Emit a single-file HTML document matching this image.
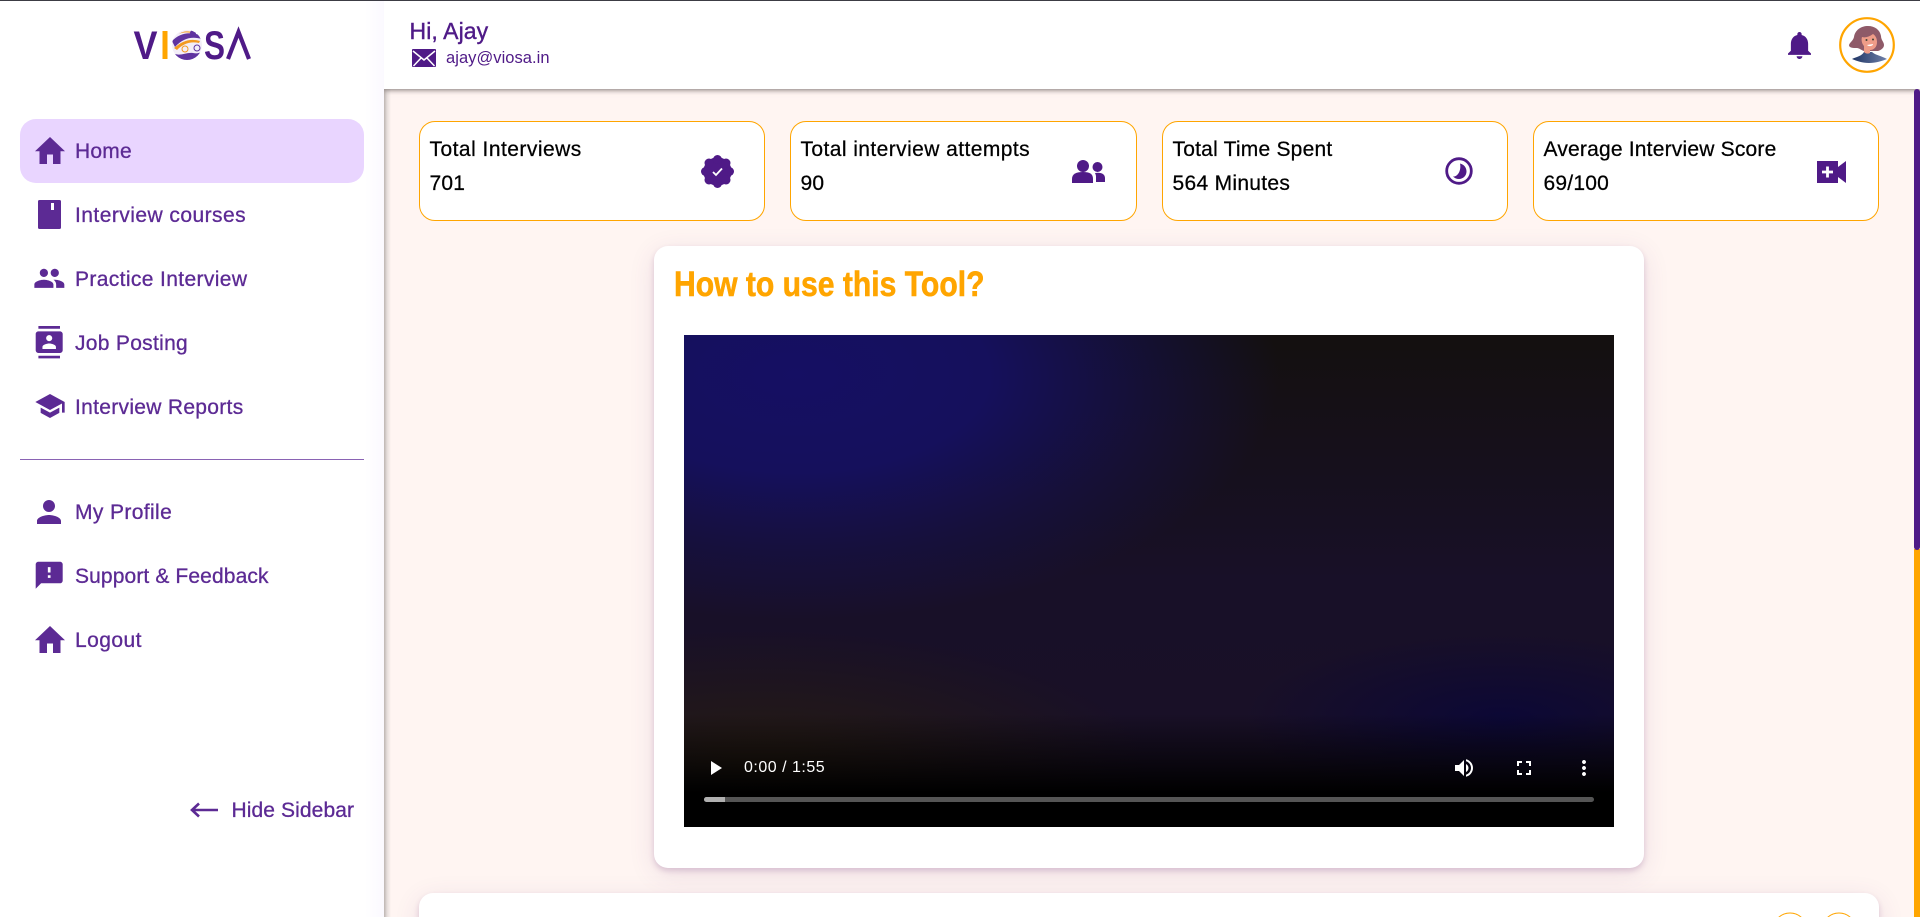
<!DOCTYPE html>
<html lang="en"><head><meta charset="utf-8"><title>VIOSA</title>
<style>
*{box-sizing:border-box}
html,body{margin:0;padding:0;width:1920px;height:917px;overflow:hidden;background:#fff;font-family:"Liberation Sans",Arial,sans-serif}
#root{position:relative;width:1920px;height:917px;overflow:hidden}
.a{position:absolute}
svg{position:absolute;display:block;overflow:visible}
#main{left:384px;top:89px;width:1536px;height:828px;background:#fff5f2}
#mshadow{left:384px;top:89px;width:7px;height:828px;background:linear-gradient(90deg,#bdb5b2,#e6dedc 45%,rgba(255,245,242,0));z-index:3}
#hdr{left:384px;top:0;width:1536px;height:89px;background:#fff;box-shadow:0 1px 5px rgba(40,30,30,.6);z-index:4}
#side{left:0;top:0;width:384px;height:917px;background:linear-gradient(90deg,#fff 95%,#fbf9ff);z-index:5}
#top{left:0;top:0;width:1920px;height:1px;background:#3c3c44;z-index:9}
.nav{position:absolute;left:75px;font-size:21px;line-height:30px;height:30px;color:#5c2a94;letter-spacing:.3px;-webkit-text-stroke:.3px #5c2a94;white-space:nowrap}
.ic{fill:#5c2a94}
#act{left:20px;top:119px;width:344px;height:64px;background:#e9d5ff;border-radius:16px}
.card{position:absolute;top:121px;width:346px;height:100px;background:#fff;border:1px solid #ffa500;border-radius:16px}
.t{position:absolute;left:9.5px;font-size:21px;line-height:30px;color:#000;letter-spacing:.22px;-webkit-text-stroke:.25px #000;white-space:nowrap}
.big{background:#fff;border-radius:14px;box-shadow:0 3px 6px rgba(110,50,120,.2),0 6px 26px rgba(110,50,120,.12)}
#vid{left:684px;top:335px;width:930px;height:492px;background:
linear-gradient(180deg,rgba(0,0,0,0) 77%,rgba(0,0,0,.6) 87%,#000 93%),
radial-gradient(ellipse 28% 18% at 88% 78%,rgba(6,4,60,.7),rgba(6,4,60,0)),
radial-gradient(ellipse 42% 28% at 8% 88%,rgba(40,30,14,.85),rgba(40,30,14,0)),
radial-gradient(ellipse 52% 50% at 12% 8%,#150f63 0%,#15105c 40%,rgba(21,16,80,.55) 72%,rgba(21,16,60,0) 100%),
linear-gradient(180deg,#14100f 0%,#181028 50%,#1a1026 100%)}
</style></head><body><div id="root">
<div class="a" id="top"></div>
<div class="a" id="main"></div>
<div class="a" id="mshadow"></div>

<div class="a" id="hdr">
 <div class="a" style="left:25.5px;top:17px;font-size:23px;line-height:28px;color:#4f1a87;letter-spacing:.1px;-webkit-text-stroke:.4px #4f1a87;white-space:nowrap">Hi, Ajay</div>
 <svg style="left:28px;top:49px" width="24" height="18" viewBox="0 0 24 18"><rect width="24" height="18" rx="1" fill="#4f1a87"/><path d="M1 2l11 9 11-9M1.5 17l8-8.5M22.5 17l-8-8.5" fill="none" stroke="#fff" stroke-width="1.5"/></svg>
 <div class="a" style="left:62px;top:48px;font-size:16.5px;line-height:20px;color:#4f1a87;letter-spacing:.05px;white-space:nowrap">ajay@viosa.in</div>
 <svg style="left:1404px;top:32px" width="23" height="27" viewBox="4 2.5 16 19.5" preserveAspectRatio="none"><path fill="#4f1a87" d="M12 22c1.1 0 2-.9 2-2h-4c0 1.1.89 2 2 2zm6-6v-5c0-3.07-1.64-5.64-4.5-6.32V4c0-.83-.67-1.5-1.5-1.5s-1.5.67-1.5 1.5v.68C7.63 5.36 6 7.92 6 11v5l-2 2v1h16v-1l-2-2z"/></svg>
 <svg style="left:1455px;top:17px" width="56" height="56" viewBox="0 0 56 56">
  <defs><linearGradient id="sh" x1="0" x2="1"><stop offset="0" stop-color="#1f3565"/><stop offset="1" stop-color="#6f80a8"/></linearGradient></defs>
  <circle cx="28" cy="28" r="26.8" fill="#fff" stroke="#ffa500" stroke-width="2.2"/>
  <path d="M13 42c4-2 10-3 12-7h8c3 3 10 4 15 7-5 2-11 4-18 4s-12-2-17-4z" fill="url(#sh)"/>
  <path d="M10 28c1-3 4-4 5-8 1-7 7-11 14-11s12 4 13 10c0 4 3 6 3 9 0 3-3 5-6 6l-14 0c-3-1-5-3-7-3-4 0-8-0-8-3z" fill="#8f5a68"/>
  <path d="M23 20c3 1 7 0 11-3 3 2 4 5 4 8 0 5-3 8-7 8v3c-2 1-4 1-6-1v-6c-2-2-3-6-2-9z" fill="#ef9c88"/>
  <path d="M28 28l6-1c0 2-4 3-6 1z" fill="#fff"/><circle cx="27.500" cy="23" r="1" fill="#443"/><circle cx="34" cy="22.500" r="1" fill="#443"/>
 </svg>
</div>

<div class="a" id="side">
 <svg style="left:133px;top:28px" width="118" height="34" viewBox="0 0 118 34">
  <defs><clipPath id="gc"><circle cx="54" cy="17" r="15"/></clipPath></defs>
  <text x=".5" y="31" font-family="Liberation Sans" font-weight="bold" font-size="40" fill="#4f1a87" textLength="24" lengthAdjust="spacingAndGlyphs">V</text>
  <rect x="29.500" y="3" width="5" height="28" fill="#ffa500"/>
  <g clip-path="url(#gc)"><rect x="38" y="2" width="32" height="30" fill="#f3eef8"/>
  <path d="M39 13c8-8 18-10 30-5v3c-10-3-19-1-27 8zM42 26c6 2 12-2 18-1 4 1 7 0 10-2v10H40z" fill="#5f33a0"/>
  <path d="M41 20c8-7 16-10 26-7l-1 2c-9-2-16 1-22 7zM46 6c4-3 8-3 13-2l-1 1c-4-1-8-1-12 1z" fill="#f39a21"/>
  <circle cx="60" cy="5" r="3" fill="#5f33a0"/><circle cx="64" cy="20" r="3" fill="none" stroke="#5f33a0"/><circle cx="52" cy="21" r="3" fill="none" stroke="#f39a21"/></g>
  <text x="71" y="31" font-family="Liberation Sans" font-weight="bold" font-size="40" fill="#4f1a87" textLength="21" lengthAdjust="spacingAndGlyphs">S</text>
  <path d="M95 31L105.500 4l10.500 27" fill="none" stroke="#4f1a87" stroke-width="4.200"/>
 </svg>

 <div class="a" id="act"></div>
 <svg style="left:34.500px;top:137px" width="30" height="27" viewBox="2 3 20 17" preserveAspectRatio="none"><path class="ic" d="M10 20v-6h4v6h5v-8h3L12 3 2 12h3v8z"/></svg>
 <div class="nav" style="top:137px;letter-spacing:.22px">Home</div>

 <svg style="left:38px;top:200px" width="23" height="29" viewBox="0 0 23 29"><rect width="23" height="29" rx="1.500" class="ic"/><rect x="13" y="3" width="3" height="7" fill="#fff"/></svg>
 <div class="nav" style="top:201px;letter-spacing:.45px">Interview courses</div>

 <svg style="left:33px;top:262px" width="32.700" height="32.700" viewBox="0 0 24 24"><path class="ic" d="M16 11c1.660 0 2.990-1.340 2.990-3S17.660 5 16 5c-1.660 0-3 1.340-3 3s1.340 3 3 3zm-8 0c1.660 0 2.990-1.340 2.990-3S9.660 5 8 5C6.340 5 5 6.340 5 8s1.340 3 3 3zm0 2c-2.330 0-7 1.170-7 3.500V19h14v-2.500c0-2.330-4.670-3.500-7-3.500zm8 0c-.29 0-.62.02-.97.05 1.160.84 1.970 1.970 1.970 3.450V19h6v-2.500c0-2.330-4.670-3.500-7-3.500z"/></svg>
 <div class="nav" style="top:265px;letter-spacing:.37px">Practice Interview</div>

 <svg style="left:33px;top:326px" width="32.400" height="32.400" viewBox="0 0 24 24"><path class="ic" d="M20 0H4v2h16V0zM4 24h16v-2H4v2zM20 4H4c-1.100 0-2 .9-2 2v12c0 1.100.9 2 2 2h16c1.100 0 2-.9 2-2V6c0-1.100-.9-2-2-2zm-8 2.750c1.240 0 2.250 1.010 2.250 2.250s-1.010 2.250-2.250 2.250S9.750 10.240 9.750 9 10.760 6.750 12 6.750zM17 17H7v-1.500c0-1.670 3.330-2.500 5-2.500s5 .83 5 2.500V17z"/></svg>
 <div class="nav" style="top:329px">Job Posting</div>

 <svg style="left:33.500px;top:390px" width="32" height="32" viewBox="0 0 24 24"><path class="ic" d="M5 13.180v4L12 21l7-3.820v-4L12 17l-7-3.820zM12 3 1 9l11 6 9-4.910V17h2V9L12 3z"/></svg>
 <div class="nav" style="top:393px">Interview Reports</div>

 <div class="a" style="left:20px;top:459px;width:344px;height:1px;background:#8a63b4"></div>

 <svg style="left:31.300px;top:494px" width="36" height="36" viewBox="0 0 24 24"><path class="ic" d="M12 12c2.210 0 4-1.790 4-4s-1.790-4-4-4-4 1.790-4 4 1.790 4 4 4zm0 2c-2.670 0-8 1.340-8 4v2h16v-2c0-2.660-5.330-4-8-4z"/></svg>
 <div class="nav" style="top:498px;letter-spacing:.38px">My Profile</div>

 <svg style="left:33px;top:559px" width="32.400" height="32.400" viewBox="0 0 24 24"><path class="ic" d="M20 2H4c-1.100 0-1.990.9-1.990 2L2 22l4-4h14c1.100 0 2-.9 2-2V4c0-1.100-.9-2-2-2zm-7 12h-2v-2h2v2zm0-4h-2V6h2v4z"/></svg>
 <div class="nav" style="top:562px;letter-spacing:.12px">Support &amp; Feedback</div>

 <svg style="left:34.500px;top:626px" width="30" height="27" viewBox="2 3 20 17" preserveAspectRatio="none"><path class="ic" d="M10 20v-6h4v6h5v-8h3L12 3 2 12h3v8z"/></svg>
 <div class="nav" style="top:626px;letter-spacing:.45px">Logout</div>

 <svg style="left:190px;top:802px" width="28" height="16" viewBox="0 0 28 16"><path d="M2 8h26M9 1.500L2 8l7 6.500" fill="none" stroke="#5c2a94" stroke-width="2.600"/></svg>
 <div class="nav" style="left:231.500px;top:796px;letter-spacing:.1px">Hide Sidebar</div>
</div>

<div class="card" style="left:419px"><div class="t" style="top:13px;letter-spacing:.47px">Total Interviews</div><div class="t" style="top:47px">701</div>
 <svg style="left:280.500px;top:33px" width="33" height="33" viewBox="0 0 33 33"><g fill="#4f1a87"><circle cx="16.500" cy="16.500" r="14.200"/><circle cx="16.500" cy="4.500" r="4.500"/><circle cx="16.500" cy="28.500" r="4.500"/><circle cx="4.500" cy="16.500" r="4.500"/><circle cx="28.500" cy="16.500" r="4.500"/><circle cx="8" cy="8" r="4.500"/><circle cx="25" cy="8" r="4.500"/><circle cx="8" cy="25" r="4.500"/><circle cx="25" cy="25" r="4.500"/></g><path d="M12 17l3 3 6-6.500" fill="none" stroke="#fff" stroke-width="1.800"/></svg>
</div>
<div class="card" style="left:790px;width:347px"><div class="t" style="top:13px;letter-spacing:.42px">Total interview attempts</div><div class="t" style="top:47px">90</div>
 <svg style="left:281px;top:38px" width="34" height="24" viewBox="0 0 34 24"><circle cx="11" cy="6" r="6" fill="#4f1a87"/><path d="M0 23v-4c0-5 4-7 11-7s10 2 10 7v4z" fill="#4f1a87"/><circle cx="25.500" cy="7" r="5" fill="#4f1a87"/><path d="M23 13c6-1 10 1 10 5v4h-9v-4c0-2 0-3-1-5z" fill="#4f1a87"/></svg>
</div>
<div class="card" style="left:1162px"><div class="t" style="top:13px">Total Time Spent</div><div class="t" style="top:47px;letter-spacing:.3px">564 Minutes</div>
 <svg style="left:282px;top:35px" width="28" height="28" viewBox="0 0 28 28"><circle cx="14" cy="14" r="12.300" fill="none" stroke="#4f1a87" stroke-width="2.800"/><path d="M15 6.500C19 7.500 21.500 10.500 21.500 14.500 21.500 18.800 18 22 14 22 11.500 22 9.500 21 8 19.500 13 20 16.500 13 15 6.500z" fill="#4f1a87"/></svg>
</div>
<div class="card" style="left:1533px"><div class="t" style="top:13px;letter-spacing:.2px">Average Interview Score</div><div class="t" style="top:47px">69/100</div>
 <svg style="left:283px;top:38px" width="30" height="24" viewBox="0 0 30 24"><rect x="0" y="1" width="21" height="22" fill="#4f1a87"/><path d="M21 7l8-6v22l-8-6z" fill="#4f1a87"/><path d="M5 12h11M10.500 6.500v11" stroke="#fff" stroke-width="2.800"/></svg>
</div>

<div class="a big" style="left:654px;top:246px;width:990px;height:622px"></div>
<div class="a" style="left:674px;top:265px;font-size:35px;line-height:40px;font-weight:bold;color:#ffa500;-webkit-text-stroke:.6px #ffa500;white-space:nowrap;transform:scaleX(.86);transform-origin:0 0">How to use this Tool?</div>

<div class="a" id="vid">
 <svg style="left:19px;top:421px" width="24" height="24" viewBox="0 0 24 24"><path fill="#fff" d="M8 5v14l11-7z"/></svg>
 <div class="a" style="left:60px;top:423px;font-size:16px;line-height:20px;color:#fff;letter-spacing:.5px;white-space:nowrap">0:00 / 1:55</div>
 <svg style="left:768px;top:421px" width="24" height="24" viewBox="0 0 24 24"><path fill="#fff" d="M3 9v6h4l5 5V4L7 9H3zm13.500 3c0-1.770-1.020-3.290-2.500-4.030v8.050c1.480-.73 2.500-2.250 2.500-4.020zM14 3.230v2.060c2.890.86 5 3.540 5 6.710s-2.110 5.850-5 6.710v2.060c4.010-.91 7-4.490 7-8.770s-2.990-7.860-7-8.770z"/></svg>
 <svg style="left:828px;top:421px" width="24" height="24" viewBox="0 0 24 24"><path fill="#fff" d="M7 14H5v5h5v-2H7v-3zm-2-4h2V7h3V5H5v5zm12 7h-3v2h5v-5h-2v3zM14 5v2h3v3h2V5h-5z"/></svg>
 <svg style="left:888px;top:421px" width="24" height="24" viewBox="0 0 24 24"><path fill="#fff" d="M12 8c1.100 0 2-.9 2-2s-.9-2-2-2-2 .9-2 2 .9 2 2 2zm0 2c-1.100 0-2 .9-2 2s.9 2 2 2 2-.9 2-2-.9-2-2-2zm0 6c-1.100 0-2 .9-2 2s.9 2 2 2 2-.9 2-2-.9-2-2-2z"/></svg>
 <div class="a" style="left:20px;top:462px;width:890px;height:5px;border-radius:3px;background:#555"></div>
 <div class="a" style="left:20px;top:462px;width:21px;height:5px;border-radius:3px 0 0 3px;background:#b0b0b0"></div>
</div>

<div class="a big" style="left:419px;top:893px;width:1460px;height:60px"></div>
<svg style="left:1770px;top:912px" width="100" height="10" viewBox="0 0 100 10"><circle cx="20" cy="18" r="17" fill="#fff" stroke="#ffa500" stroke-width="1"/><circle cx="69" cy="18" r="17" fill="#fff" stroke="#ffa500" stroke-width="1"/></svg>

<div class="a" style="left:1914px;top:89px;width:6px;height:461px;background:#4f1a87;border-radius:3px;z-index:6"></div>
<div class="a" style="left:1914px;top:549px;width:6px;height:368px;background:#ffa500;z-index:5"></div>
</div></body></html>
